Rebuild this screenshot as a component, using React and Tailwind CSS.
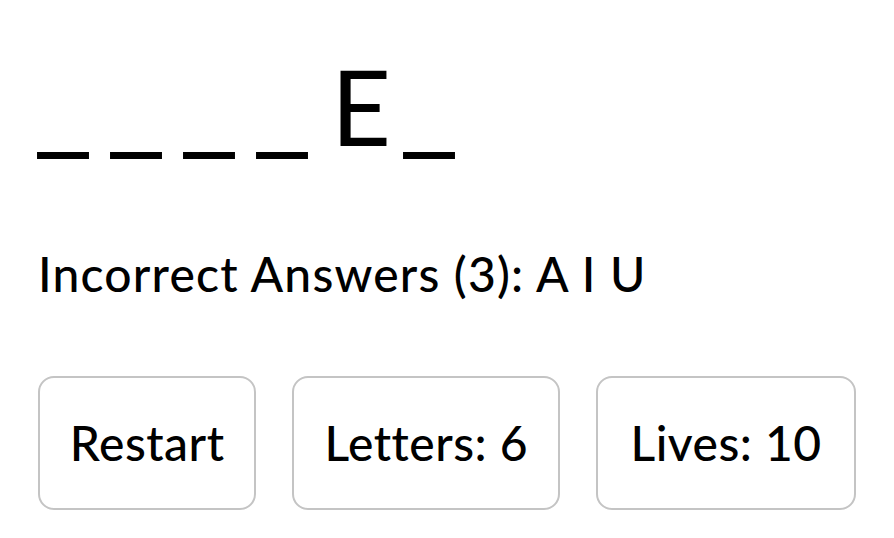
import React from 'react';

export default function App() {
  const word = ['_', '_', '_', '_', 'E', '_'];
  const wrong = ['A', 'I', 'U'];

  return (
    <section
      className="min-h-screen bg-white text-black px-[38px] pt-[54px] font-medium"
      style={{ fontFamily: 'Lato, "Open Sans", sans-serif' }}
    >
      <div className="flex h-[104px] items-baseline text-[104px] leading-none font-normal">
        {word.map((c, i) =>
          c === '_' ? (
            <span
              key={i}
              className="w-[55px] mr-[18px] -translate-y-[11px] text-[100px] leading-none"
              style={{ fontFamily: '"DejaVu Sans", sans-serif' }}
            >
              {c}
            </span>
          ) : (
            <span key={i} className="ml-[1px] mr-[13px]">{c}</span>
          )
        )}
      </div>

      <p className="mt-[92px] text-[48px] leading-none tracking-[1.2px]">
        Incorrect Answers ({wrong.length}): {wrong.join(' ')}
      </p>

      <div className="mt-[78px] flex gap-[36px]">
        <button className="w-[221px] py-[41px] border-2 border-[#c4c4c4] rounded-[16px] text-[48px] leading-none tracking-[0.5px] font-medium">
          Restart
        </button>
        <div className="w-[271px] py-[41px] border-2 border-[#c4c4c4] rounded-[16px] text-[48px] leading-none tracking-[0.5px] text-center">
          Letters: {word.length}
        </div>
        <div className="w-[263px] py-[41px] border-2 border-[#c4c4c4] rounded-[16px] text-[48px] leading-none tracking-[0.5px] text-center">
          Lives: 10
        </div>
      </div>
    </section>
  );
}
